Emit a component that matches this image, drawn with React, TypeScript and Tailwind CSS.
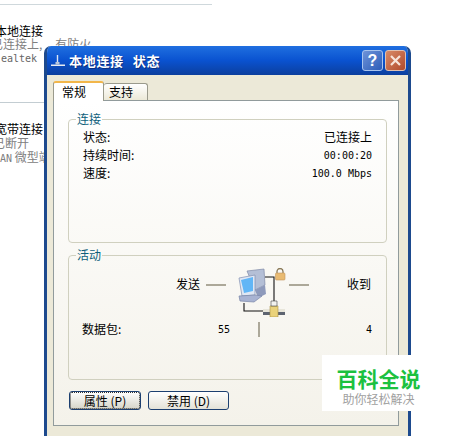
const cjk = "font-['Noto_Sans_CJK_SC','Liberation_Sans',sans-serif]";
const mono = "font-['DejaVu_Sans_Mono',monospace] text-[10px]";

function NetIcon() {
  return (
    <svg width="48" height="49" viewBox="0 0 48 49" className="block shrink-0">
      {/* back monitor */}
      <path d="M9 3L26 1L27 17L17 22Z" fill="#b4bfd6" stroke="#7f8aa6" strokeWidth="0.7" />
      <path d="M17 22L27 17L28 26L20 30Z" fill="#8e9abb" />
      {/* front monitor */}
      <path d="M1 10L17 7L17 27L4 28Z" fill="#dfe7f4" stroke="#7f8eb0" strokeWidth="0.7" />
      <path d="M3 12L15 9L15 23L6 25Z" fill="#62b6f6" />
      <path d="M1 28L17 27L24 28L16 34L2 33Z" fill="#a8b3d2" stroke="#7a86a8" strokeWidth="0.7" />
      {/* cables */}
      <path d="M27 9H36V35" fill="none" stroke="#111" strokeWidth="1.1" />
      <path d="M6 35V43H26" fill="none" stroke="#111" strokeWidth="1.1" />
      {/* connector */}
      <path d="M25 41H47V44H25Z" fill="#e8e6da" />
      <path d="M25 44H47V47H25Z" fill="#5d6470" />
      <path d="M32 38H40V49H32Z" fill="#ead27a" stroke="#a89248" strokeWidth="0.6" />
      <path d="M33 33H39V38H33Z" fill="#f2f2ee" stroke="#444" strokeWidth="0.6" />
      {/* lock */}
      <path d="M39 5V3.5A3 3 0 0 1 45 3.5V5" fill="none" stroke="#8a7a58" strokeWidth="1.3" />
      <rect x="37.5" y="5" width="9.5" height="7" rx="1" fill="#e9bb72" stroke="#c2955a" strokeWidth="0.6" />
    </svg>
  );
}

function Row({ label, value, latin }: { label: string; value: string; latin?: boolean }) {
  return (
    <div className="flex h-[18px] items-center justify-between">
      <span>{label}</span>
      <span className={latin ? mono : ""}>{value}</span>
    </div>
  );
}

export default function App() {
  return (
    <div className={`relative h-[436px] w-[463px] overflow-hidden bg-white text-[12px] text-black ${cjk}`}>
      {/* Background window behind the dialog */}
      <div className="absolute left-0 top-[4px] h-px w-[212px] bg-[#cfd8dc]" />
      <div className="absolute left-[-5px] top-[24px] w-[120px] leading-[14px]">
        <div>本地连接</div>
        <div className="-ml-[4px] -mt-[1px] whitespace-nowrap text-[#808080]">
          已连接上,<span className="ml-[13px]">有防火</span>
        </div>
        <div className={`ml-[6px] mt-[1px] leading-[13px] text-[#666] ${mono}`}>ealtek</div>
      </div>
      <div className="absolute left-0 top-[102px] h-px w-[44px] bg-[#c3cdd2]" />
      <div className="absolute left-[-5px] top-[122px] w-[70px] leading-[14px]">
        <div>宽带连接</div>
        <div className="-ml-[2px] text-[#808080]">已断开</div>
        <div className="ml-[5px] whitespace-nowrap text-[#808080]">
          <span className={mono}>AN</span> 微型端
        </div>
      </div>

      {/* Dialog window */}
      <div className="absolute left-[44px] top-[46px] h-[400px] w-[367px] overflow-hidden rounded-t-[7px] border-x-[3px] border-x-[#1d4a8e] bg-[#ece9d8]">
        <div className="-mx-[3px] flex h-[29px] items-center justify-between bg-gradient-to-b from-[#1f6fe0] via-[#0a52d0] to-[#0b3f9e] pl-[6px] pr-[5px]">
          <div className="flex items-center gap-[3px]">
            <svg width="16" height="16" viewBox="0 0 16 16">
              <path d="M7.5 2V11" stroke="#dbe6f5" strokeWidth="1.4" />
              <path d="M1 11.5H15V13H1Z" fill="#e8ecf2" />
              <path d="M5.5 9H9.5V11.5H5.5Z" fill="#b8c6dc" />
            </svg>
            <span className="whitespace-pre text-[13px] font-bold tracking-[0.7px] text-white [text-shadow:1px_1px_#0a2f80]">
              本地连接<span className="ml-[9px]">状态</span>
            </span>
          </div>
          <div className="flex gap-[2px]">
            <div className="flex h-[21px] w-[21px] items-center justify-center rounded-[3px] border border-[#a8c4ee] bg-gradient-to-br from-[#6f93d8] to-[#2b5cb8] font-['Liberation_Sans',sans-serif] text-[16px] font-bold leading-none text-white">?</div>
            <div className="flex h-[21px] w-[21px] items-center justify-center rounded-[3px] border border-[#e0c0b0] bg-gradient-to-br from-[#d88a68] to-[#b04a2c]">
              <svg width="13" height="13" viewBox="0 0 13 13">
                <path d="M2 2L11 11M11 2L2 11" stroke="#f6e4da" strokeWidth="2.2" />
              </svg>
            </div>
          </div>
        </div>

        <div className="px-[6px] pt-[6px]">
          {/* Tabs */}
          <div className="relative z-10 flex h-[19px] items-end">
            <div className="-mb-px flex h-[20px] w-[51px] items-center rounded-t-[3px] border-x border-t-2 border-x-[#9a9a8c] border-t-[#f2b64a] bg-white pl-[8px] text-[12px]">常规</div>
            <div className="flex h-[17px] w-[44px] items-center rounded-t-[3px] border-r border-t border-[#9a9a8c] bg-gradient-to-b from-white to-[#ece9d8] pl-[5px] text-[12px]">支持</div>
          </div>

          {/* Tab panel */}
          <div className="h-[326px] w-[346px] border border-[#919b9c] bg-gradient-to-b from-white to-[#f4f2ea] pl-[14px] pr-[11px] pt-[11px]">
            <fieldset className="h-[131px] rounded-[4px] border border-[#d0d0bf] pl-[7px] pr-[14px]">
              <legend className="px-[1px] leading-[14px] text-[#0e5f7c]">连接</legend>
              <div className="pl-[7px] pt-[2px]">
                <Row label="状态:" value="已连接上" />
                <Row label="持续时间:" value="00:00:20" latin />
                <Row label="速度:" value="100.0 Mbps" latin />
              </div>
            </fieldset>

            <fieldset className="mt-[5px] h-[132px] rounded-[4px] border border-[#d0d0bf] pl-[7px]">
              <legend className="px-[1px] leading-[14px] text-[#0e5f7c]">活动</legend>
              <div className="-ml-[7px] flex h-[55px] items-start pl-[107px] pr-[15px] pt-[6px]">
                <span className="mt-[8px] w-[24px] leading-[16px]">发送</span>
                <span className="ml-[6px] mt-[16px] h-[2px] w-[20px] bg-[#aca899]" />
                <div className="ml-[12px]"><NetIcon /></div>
                <span className="ml-[3px] mt-[16px] h-[2px] w-[20px] bg-[#aca899]" />
                <span className="ml-auto mt-[8px] whitespace-nowrap leading-[16px]">收到</span>
              </div>
              <div className="-ml-[7px] mt-[4px] flex h-[16px] items-center pl-[13px] pr-[14px]">
                <span className="w-[136px]">数据包:</span>
                <span className={`w-[12px] ${mono}`}>55</span>
                <span className="ml-[28px] h-[15px] w-[2px] bg-[#aca899]" />
                <span className={`ml-auto ${mono}`}>4</span>
              </div>
            </fieldset>

            <div className="ml-px mt-[11px] flex gap-[7px]">
              <button className="flex h-[19px] w-[72px] items-center justify-center rounded-[3px] border border-[#1c3f70] bg-gradient-to-b from-white to-[#d6d4c8] text-[12px] outline-1 -outline-offset-2 outline-dotted outline-[#333]">属性 (P)</button>
              <button className="flex h-[19px] w-[81px] items-center justify-center rounded-[3px] border border-[#1c3f70] bg-gradient-to-b from-white to-[#e4e2d8] text-[12px]">禁用 (D)</button>
            </div>
          </div>
        </div>
      </div>

      {/* Watermark */}
      <div className="absolute left-[322px] top-[355px] flex h-[56px] w-[113px] flex-col items-center bg-white pt-[9px]">
        <span className="whitespace-nowrap text-[21px] font-bold leading-[28px] text-[#1cc13f]">百科全说</span>
        <span className="whitespace-nowrap leading-[14px] text-[#a0a0a0]">助你轻松解决</span>
      </div>
    </div>
  );
}
